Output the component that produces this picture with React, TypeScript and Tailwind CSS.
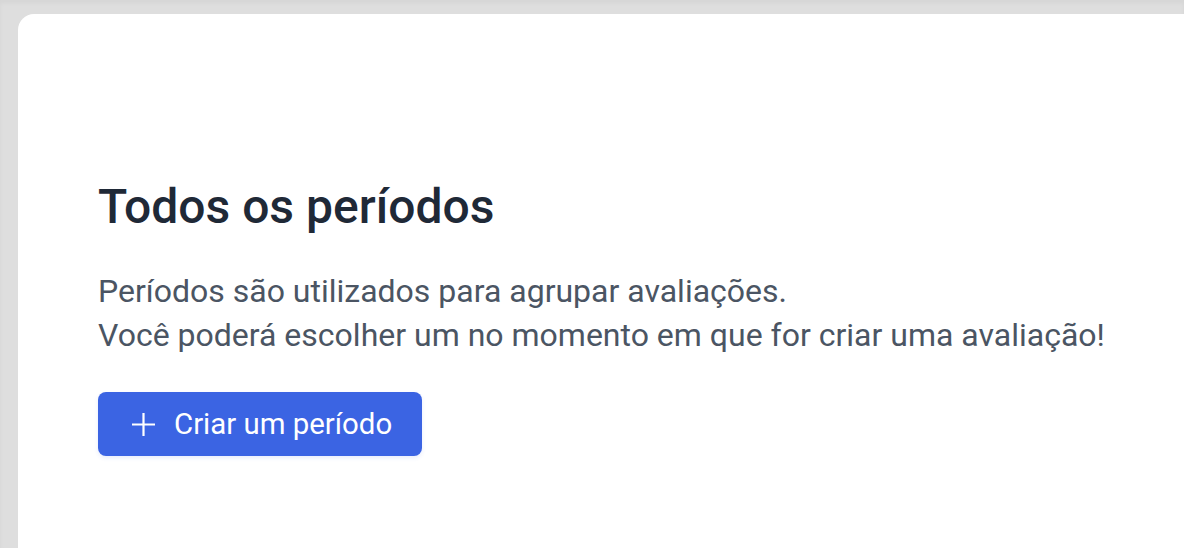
export default function App() {
  return (
    <div className="h-[548px] w-[1184px] overflow-hidden bg-[#dedede] pl-[18px] pt-[14px] shadow-[inset_0_3px_4px_rgba(0,0,0,0.04)]" style={{ fontFamily: "Roboto, 'Noto Sans', sans-serif" }}>
      <div className="h-full w-full rounded-tl-2xl bg-white pl-[80px] pt-[165px]">
        <h1 className="text-[48px] font-medium leading-[56px] text-[#1f2937]">Todos os períodos</h1>
        <p className="mt-[34px] text-[32px] leading-[44px] text-[#4b5563]">
          Períodos são utilizados para agrupar avaliações.
          <br />
          Você poderá escolher um no momento em que for criar uma avaliação!
        </p>
        <button className="mt-[35px] flex h-[64px] items-center gap-[19px] rounded-lg bg-[#3b64e3] pl-[34px] pr-[30px] text-[29.4px] text-white shadow-[0_2px_4px_rgba(59,100,227,0.12)]">
          <svg width="23" height="23" viewBox="0 0 23 23" fill="none" stroke="currentColor" strokeWidth="2.2">
            <path d="M11.5 0v23M0 11.5h23" />
          </svg>
          Criar um período
        </button>
      </div>
    </div>
  );
}
